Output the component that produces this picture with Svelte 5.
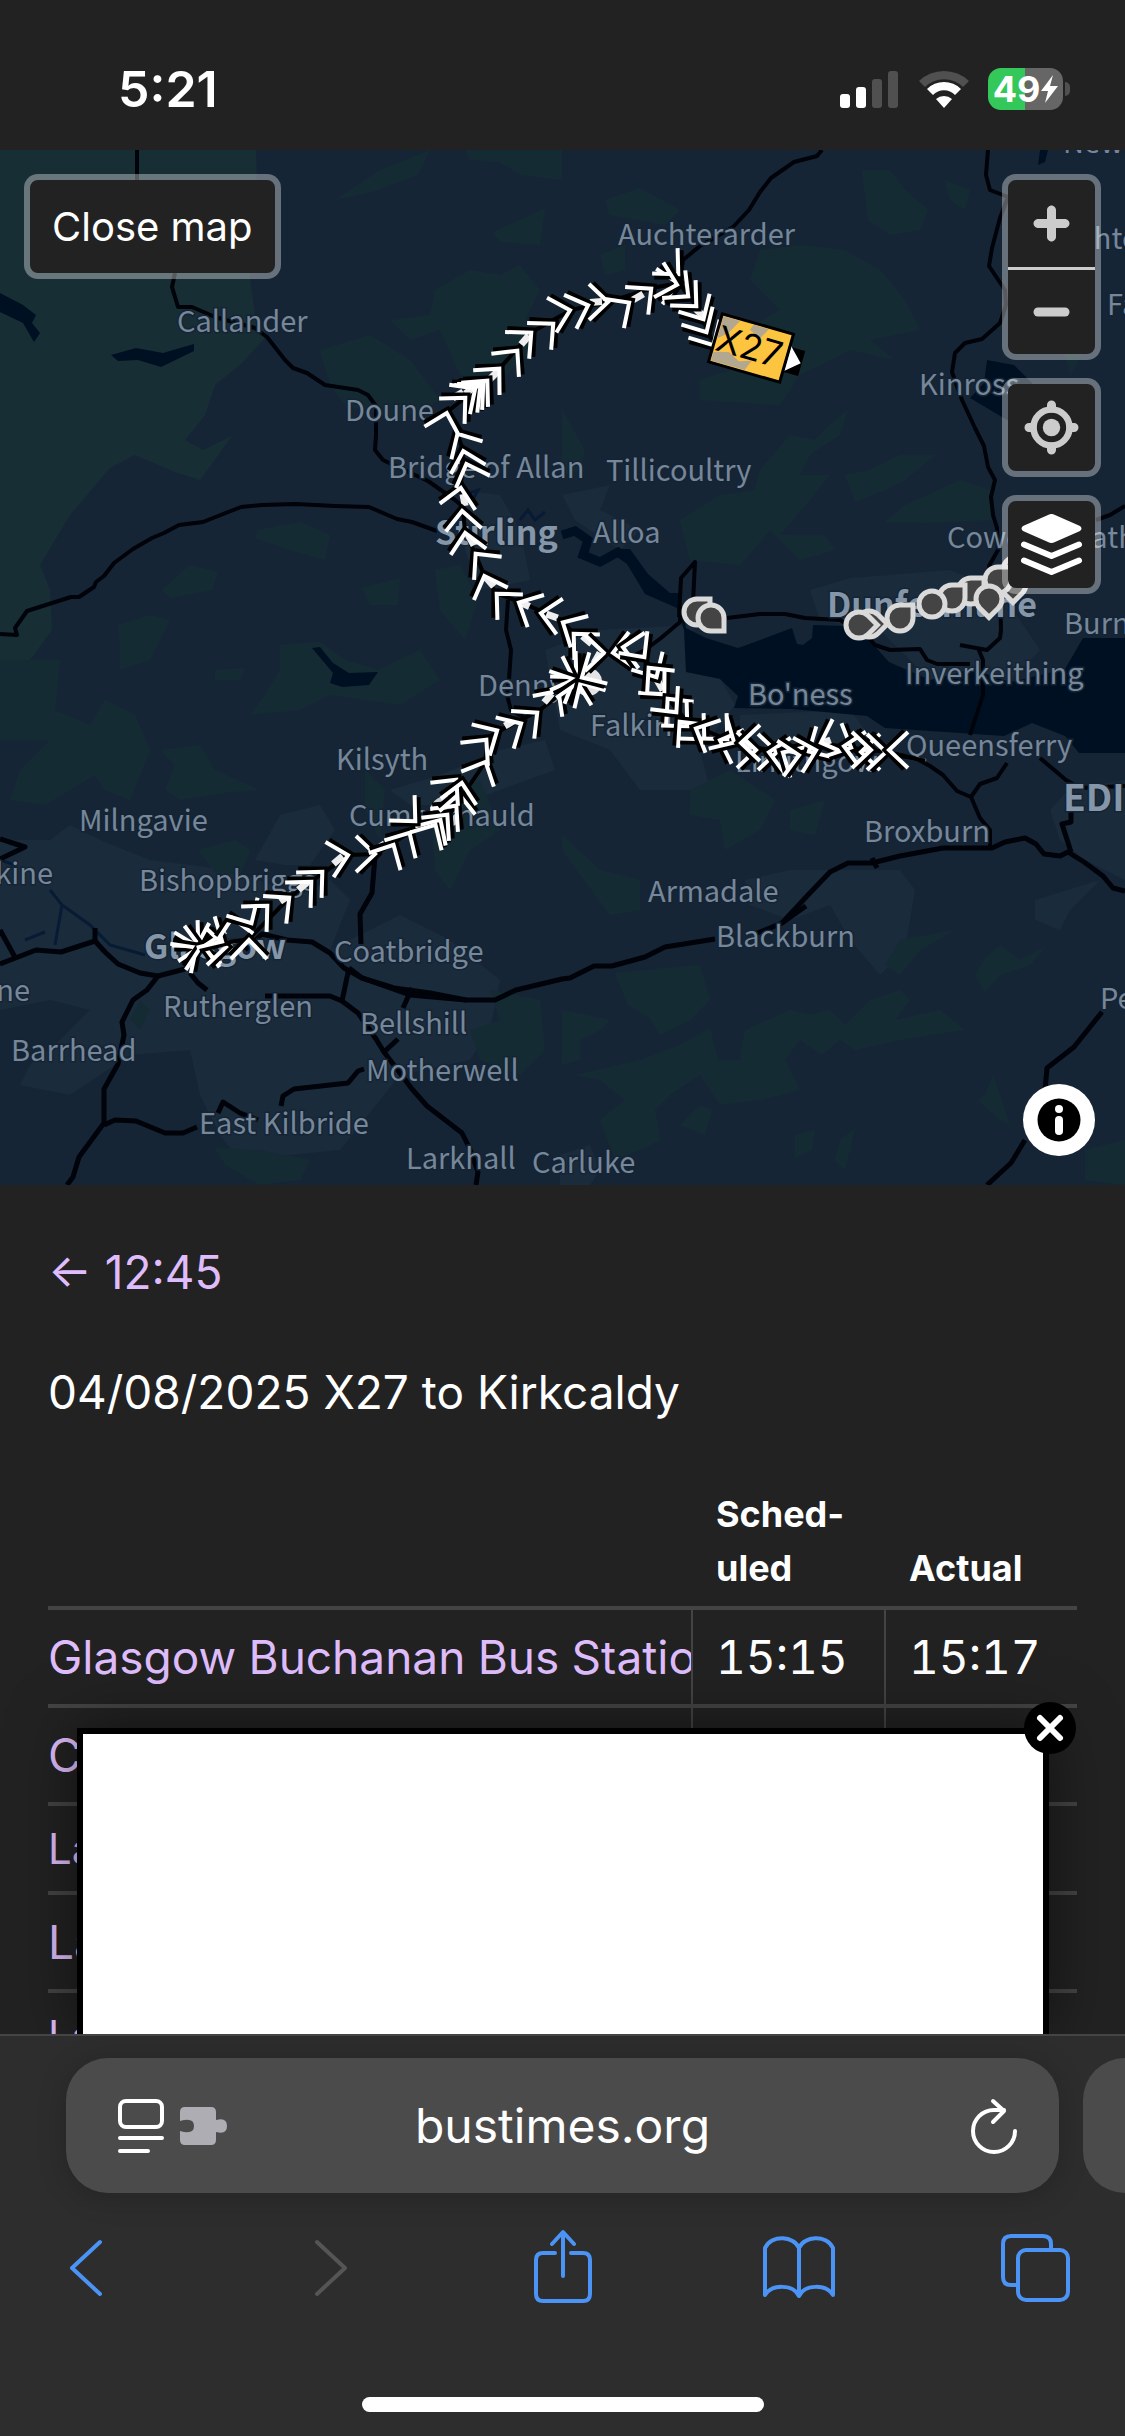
<script>
  const woods = [
    'M335 50L380 20L430 0L418 25L372 42Z',
    'M465 0H562V30L520 25L500 12L470 10Z',
    'M492 82L520 70L545 58L540 95L500 92Z',
    'M435 140L470 120L500 125L520 115L540 140L525 170L535 200L500 230L460 225L440 180L410 190L390 170L430 165Z',
    'M320 200L370 185L410 210L440 250L400 270L345 255L330 235Z',
    'M258 380L300 372L330 385L325 410L290 400L255 388Z',
    'M162 440L190 415L218 422L212 440L170 448Z',
    'M362 438L400 428L398 455L370 455Z',
    'M435 420L460 415L478 450L465 490L440 460Z',
    'M118 475L150 465L170 470L150 510L120 520L120 495Z',
    'M280 495L320 492L345 510L378 520L420 500L440 530L400 555L330 545L300 560L250 565L265 545L280 520Z',
    'M0 510L60 510L55 560L90 575L105 550L135 565L150 600L130 650L105 640L95 625L45 655L10 650L20 620L50 590L0 590Z',
    'M215 520L245 518L240 530L215 530Z',
    'M160 600L200 595L215 620L260 640L230 642L180 650L165 640L175 615Z',
    'M198 700L235 690L250 700L240 725L215 722Z',
    'M365 620L385 640L380 690L365 660Z',
    'M430 650L480 630L500 680L470 700L450 740L435 720Z',
    'M490 840L540 850L545 900L520 925L480 910L470 880L500 870Z',
    'M605 50L640 38L680 60L665 75L610 65Z',
    'M600 105L625 95L625 120L605 125Z',
    'M862 20L890 20L905 40L928 60L920 80L890 85L868 70Z',
    'M945 30L970 40L965 60L950 50Z',
    'M760 100L800 95L845 100L880 120L905 150L920 180L870 190L895 210L850 200L800 225L780 255L700 250L700 230L760 210L745 180L780 160L750 130Z',
    'M562 260L585 300L580 320L562 325Z',
    'M790 285L815 290L835 270L848 260L840 285L810 305L800 325L830 325L810 350L780 385L825 385L835 400L800 410L770 380L740 415L690 410L680 370L720 345L755 340L760 320Z',
    'M845 325L870 320L900 305L935 305L905 330L885 340L855 352Z',
    'M885 372L905 355L960 330L990 340L992 370L930 373Z',
    'M690 640L730 620L775 650L760 680L725 700L720 670L690 665Z',
    'M790 660L825 650L815 685L790 680Z',
    'M562 685L600 720L640 730L640 760L610 765L562 700Z',
    'M615 823L665 818L700 815L710 850L690 870L660 885L650 868L628 855Z',
    'M562 860L610 870L600 880L580 890L580 910L562 915Z',
    'M575 925L640 910L680 895L710 878L718 910L740 910L745 880L790 860L810 865L830 860L845 875L870 850L900 840L910 850L895 870L940 860L965 880L930 885L900 890L855 900L840 890L822 905L800 890L785 910L800 940L760 950L720 955L700 925L670 945L655 960L660 990L640 1000L615 1010L600 970L625 950L600 930Z',
    'M985 808L1000 795L1020 810L1048 795L1030 815L1000 825L985 842L975 825Z',
    'M900 790L955 780L920 800L900 825L885 815Z',
    'M680 975L700 955L712 960L705 985Z',
    'M795 985L815 980L812 1000L795 1008Z',
    'M840 990L855 978L845 1020L835 1010Z',
    'M985 945L993 925L1010 975L1000 970L978 950Z',
    'M1085 1000L1125 990V1035L1085 1030Z',
    'M1095 140L1085 200L1070 225L1065 205L1080 180Z',
    'M215 998L260 1000L310 1010L300 1030L260 1035L225 1015Z',
    'M140 850L150 860L140 880L130 870Z'
  ];
  const highland = 'M0 0H256L258 70L250 130L255 165L268 185L240 215L215 235L205 265L185 290L203 300L232 286L222 300L200 330L175 322L135 305L110 318L70 365L40 415L50 440L52 480L30 510L0 520Z';
  const towns = [
    'M0 690L50 690L70 675L100 690L150 710L230 720L300 745L330 730L350 750L330 800L400 765L450 790L500 830L490 880L470 910L400 925L340 1000L240 1010L220 985L200 945L190 900L130 905L70 945L20 935L30 915L60 890L90 860L50 850L0 860Z',
    'M255 710L280 665L320 655L335 680L310 715L285 715Z',
    'M390 640L440 625L500 600L545 590L555 620L500 640L460 655L410 655Z',
    'M460 340L500 345L520 380L530 430L480 440L465 400Z',
    'M562 345L610 335L600 360L640 380L620 400L575 370Z',
    'M545 500L600 480L690 475L735 555L700 600L710 640L640 640L610 600L560 580Z',
    'M810 440L850 428L950 420L1000 440L1040 500L1000 540L930 530L880 480L820 470Z',
    'M740 565L850 560L880 600L780 620L740 595Z',
    'M745 730L790 720L900 720L915 740L905 800L880 825L850 790L830 755L790 770L750 755Z',
    'M1050 660L1068 640L1125 630V730L1085 710L1060 690Z',
    'M1035 750L1100 730L1070 760L1060 780L1035 770Z',
    'M560 1005L590 995L600 1020L590 1035H560Z'
  ];
  const water = [
    'M0 143L23 155L36 165L32 173L40 183L34 192L23 173L0 162Z',
    'M111 205L136 198L163 203L194 194V201L161 217L138 210L118 211Z',
    'M312 498L320 497L333 513L349 523L378 522L369 535L342 537L330 533L333 523Z',
    'M987 210L1014 215L1032 233L1040 280L1007 270L970 248L984 233Z',
    'M1040 0H1048L1045 12L1038 15Z',
    'M618 399L630 399L648 424L670 443L679 443L686 478L706 488L738 498L760 490L792 478L797 494L803 495L812 488L813 475L846 476L871 492L889 512L930 530L971 519L1011 532L1065 519L1083 488H1125V603H1079L1065 586L1032 573L1004 586L885 578L867 566L792 559L734 558L738 546L720 529L686 522L684 480L677 458L645 444Z'
  ];
  const roads = [
    'M137 0V30', 'M175 123L172 137L178 157L192 157L215 167L255 178L267 187L285 210L293 218L307 223L325 235L358 240L368 245L376 256V285L375 300L383 310L400 318L428 331L455 350L462 356',
    'M0 484L17 485L15 478L27 461L71 447H79L94 437L96 432L104 426L114 413L133 399L152 388L164 383L179 375L203 372L241 357L262 355L296 354L335 356L369 357L397 369L412 372L437 381',
    'M508 450L506 480L511 500L509 530L507 545L511 560L525 568',
    'M822 0L817 6L794 12L771 28L760 42L749 60L733 77L700 96L683 110L680 130',
    'M988 0L986 25L990 40L1008 47L1000 68L992 98L989 116L1005 140L1006 155L1000 173L982 189L965 193L955 203L952 222L962 250L975 278L984 296L988 317L995 330L991 347L993 365L997 378L998 400L989 416L1000 440L1001 480L1000 488L987 500L960 495',
    'M978 498L983 510V545L970 585',
    'M727 468L760 464H785L805 468L840 470L868 487L875 495L890 500L920 499L927 510L937 514H970',
    'M680 466V472L661 488L645 500L620 512', 'M693 452L695 412L681 428L679 467', 'M1096 370L1110 365L1125 356',
    'M882 604L915 608L930 616L943 625L957 641L971 647L980 668L990 680V697', 'M971 647L980 634L997 628L1007 613', 'M1040 608L1066 630L1080 638L1125 636'
  ];
  const motorways = [
    'M782 773L808 745L830 722L848 713L872 713L900 706L943 698H992L1005 692L1025 688L1036 694L1044 704L1060 706L1068 702L1084 712L1103 726L1113 738L1125 741',
    'M1071 702L1062 674L1071 672V660', 'M872 708L877 718', 'M806 756L782 773L770 778L755 784', 'M715 789L665 797L645 807L612 816H594L570 828L562 829L516 840L495 850H466L430 843L394 838L362 828L344 818L330 803L312 792L287 790L262 784L245 800',
    'M349 818L362 828L410 845L466 850', 'M375 706L372 743L360 764L361 794', 'M349 818L342 851L358 863L376 889L384 902L412 939L427 956L462 983L469 997L478 1022L476 1035',
    'M342 851L330 846H265', 'M207 840L198 833L190 823', 'M412 838L403 858', 'M398 889L384 902',
    'M0 814L18 807L36 800L61 802L95 791L105 802L118 814L140 823L158 826L185 819', 'M95 778V791',
    'M158 826L147 840L133 850L122 872L124 885L118 914L104 939V973L79 1007L73 1027L67 1035',
    'M104 975L115 970L136 971L165 983H183L197 977', 'M218 963L223 952L240 963L258 970', 'M281 956L283 946L294 939L348 933L358 921L364 919',
    'M0 780L16 809', 'M0 689L25 697L0 709', 'M1102 862L1074 897L1047 918L1045 940', 'M1025 990L1011 1013L987 1035'
  ];
  const routes = [
    'M199 797L249 789L290 747L323 723L349 705L376 704L410 682L450 664L484 614L490 586L540 560L578 530L573 483L562 470L520 452L496 443L484 425L475 403L465 382L461 337L463 300L457 283L447 262L466 247L500 218L532 182L571 160L609 152L652 138L679 133L697 157L712 190',
    'M578 530L605 503L645 508L665 545L688 573L735 593L778 602L808 602L820 593L852 598L888 602L925 611'
  ];

  // [label, x, baseline]
  const places = [
    ['Callander', 177, 182], ['Doune', 345, 271], ['Bridge of Allan', 388, 328], ['Auchterarder', 618, 95],
    ['Tillicoultry', 606, 331], ['Alloa', 593, 393], ['Kinross', 919, 245], ['Cowdenbeath', 947, 398],
    ['Newburgh', 1063, 3], ['Auchtermuchty', 1044, 99], ['Falkland', 1107, 165], ['Burntisland', 1064, 484],
    ['Inverkeithing', 905, 534], ["Bo'ness", 748, 555], ['Falkirk', 590, 586], ['Linlithgow', 735, 622],
    ['Queensferry', 906, 606], ['Broxburn', 864, 692], ['Armadale', 648, 752], ['Blackburn', 716, 797],
    ['Penicuik', 1100, 859], ['Denny', 478, 546], ['Kilsyth', 336, 620], ['Cumbernauld', 349, 676],
    ['Milngavie', 79, 681], ['Bishopbriggs', 139, 741], ['Coatbridge', 334, 812], ['Rutherglen', 163, 867],
    ['Bellshill', 360, 884], ['Barrhead', 11, 911], ['Motherwell', 366, 931], ['East Kilbride', 199, 984],
    ['Larkhall', 406, 1019], ['Carluke', 532, 1023]
  ];
  const cut = [['Erskine', 53, 734], ['Johnstone', 30, 851]];

  // [x, y, heading] of each recorded position, east is 0
  const track = [
    [199, 797, 45], [197, 797, 75], [201, 797, 10], [197, 797, -35], [200, 797, -100], [203, 796, 190],
    [227, 797, 0], [223, 792, 30], [232, 767, -100], [252, 774, 60], [249, 789, -90],
    [268, 755, -45], [290, 747, -40], [312, 731, -45], [323, 721, -45], [349, 705, -13], [376, 704, 0],
    [394, 694, -62], [410, 682, -60], [436, 674, -60], [441, 669, -58], [448, 664, -50], [457, 655, -50], [416, 672, 45],
    [459, 643, -85], [457, 629, -50], [462, 632, -80], [486, 611, -65], [487, 589, -50], [498, 580, -30], [522, 573, -30], [538, 562, -40],
    [559, 540, -55], [577, 528, 45], [575, 530, 20], [575, 529, -25], [578, 532, -78], [580, 532, -120], [581, 528, 150],
    [573, 483, -135], [562, 472, -151], [540, 463, -170], [518, 452, -153], [496, 443, -135],
    [484, 425, -110], [475, 403, -130], [465, 382, -100], [462, 360, -95], [461, 337, -80], [466, 313, -110], [463, 300, -105],
    [457, 283, -120], [447, 262, -75], [466, 247, -45], [476, 238, -35], [481, 236, -40], [484, 233, -44], [488, 230, -48],
    [500, 218, -47], [518, 200, -50], [532, 182, -42], [554, 173, -42], [571, 160, -15], [589, 155, -20], [609, 152, 0],
    [630, 152, -35], [652, 138, -40], [679, 133, -10], [679, 125, 45], [678, 135, 15], [689, 147, 40], [697, 157, 45], [704, 170, 60],
    [707, 183, 60], [714, 196, 60],
    [605, 503, 0], [612, 503, 171], [622, 497, 190], [645, 508, 53], [657, 528, 60], [665, 545, 47], [648, 517, -130], [667, 548, -130],
    [677, 563, 50], [688, 577, 45], [679, 571, -130], [705, 590, 45], [695, 578, -155], [728, 590, 45], [719, 590, -160],
    [735, 593, 30], [757, 600, 0], [740, 593, 180], [778, 602, 0], [768, 602, 190], [782, 602, -150], [800, 605, -10],
    [808, 602, 150], [817, 600, -15], [820, 593, 160], [852, 598, 25], [843, 596, 190], [860, 602, 180], [872, 600, 0], [887, 602, 0], [888, 600, 180]
  ];
  const glints = [
    [285, 748, -35], [303, 736, -40], [338, 710, -40], [380, 697, -35], [510, 573, -30], [548, 548, -50],
    [524, 454, 25], [552, 466, 20], [587, 490, 40], [597, 508, -60], [490, 432, 50], [471, 390, 60], [464, 350, 80],
    [458, 245, -30], [470, 240, -40], [494, 225, -45], [525, 190, -50], [596, 152, -5], [638, 147, -30],
    [660, 535, 60], [748, 594, 30], [790, 600, 10], [825, 592, -20], [867, 599, 10], [700, 163, 45]
  ];

  // [x, y, direction of the point] - null is a plain dot
  const vehicles = [
    [1016, 420, 0], [1013, 434, 90], [998, 430, -45], [971, 441, -45], [952, 448, -45], [932, 454, null], [989, 449, 90],
    [900, 468, -45], [869, 474, 0], [859, 475, 0], [697, 462, -45], [711, 468, 45]
  ];

  const stops = [
    { name: 'Glasgow Buchanan Bus Station', scheduled: '15:15', actual: '15:17' },
    { name: 'Cumbernauld' },
    { name: 'Larbert', minor: true },
    { name: 'Larbert' },
    { name: 'Larbert', minor: true },
    { name: 'Larbert' }
  ];
  let advert = $state(true);
</script>

<div class="phone">
  <header class="status">
    <span class="clock">5:21</span>
    <div class="indicators">
      <svg width="60" height="38" viewBox="0 0 60 38" fill="#fff" aria-hidden="true">
        <rect x="0" y="24" width="10" height="14" rx="3" />
        <rect x="16" y="17" width="10" height="21" rx="3" />
        <rect x="32" y="9" width="10" height="29" rx="3" fill="#505050" />
        <rect x="48" y="1" width="10" height="37" rx="3" fill="#505050" />
      </svg>
      <svg width="52" height="38" viewBox="0 0 52 38" aria-hidden="true">
        <path d="M1 11A36 36 0 0 1 51 11L45 17A27 27 0 0 0 7 17Z" fill="#505050" />
        <path d="M9 19A24 24 0 0 1 43 19L37 25A15 15 0 0 0 15 25Z" fill="#fff" />
        <path d="M18 29A12 12 0 0 1 34 29L26 38Z" fill="#fff" />
      </svg>
      <div class="battery">
        <span>49</span>
        <svg width="17" height="28" viewBox="0 0 17 28" aria-hidden="true"><path d="M12 0L0 16H7L4 28L17 11H9Z" fill="#fff" /></svg>
      </div>
    </div>
  </header>

  <section class="map">
    <svg class="canvas" viewBox="0 0 1125 1035">
      <g fill="#1a2b3c">{#each towns as d}<path {d} />{/each}</g>
      <path d={highland} fill="#172e35" />
      <g fill="#152b34">{#each woods as d}<path {d} />{/each}</g>
      <g fill="#001023">{#each water as d}<path {d} />{/each}</g>
      <path class="river" d="M562 385L575 381L588 390L583 405L600 412L618 402L632 412" />
      <path class="stream" d="M0 710L15 715M50 740L62 755L90 775L110 795L145 805M62 755L55 795M25 790L45 782M465 345L478 340L470 355M520 370L528 360L535 370L545 362" />
      <g class="road">{#each roads as d}<path {d} />{/each}</g>
      <g class="motorway">{#each motorways as d}<path {d} />{/each}</g>
      <circle cx="588" cy="532" r="14" fill="#e4e4e6" />
      <circle cx="446" cy="662" r="16" fill="#c9ccd0" />
      <g class="place">
        {#each places as [name, x, y]}<text {x} {y}>{name}</text>{/each}
        {#each cut as [name, x, y]}<text {x} {y} text-anchor="end">{name}</text>{/each}
      </g>
      <g class="place town">
        <text x="435" y="395">Stirling</text>
        <text x="827" y="467">Dunfermline</text>
        <text x="144" y="809">Glasgow</text>
        <text class="city" x="1063" y="661">EDINBURGH</text>
      </g>
      <g class="route">{#each routes as d}<path {d} />{/each}</g>
      <g class="glint">
        {#each glints as [x, y, turn]}<path d="M-6 0H6" transform="translate({x} {y}) rotate({turn})" />{/each}
      </g>
      {#each track as [x, y, turn]}
        <g transform="translate({x} {y}) rotate({turn})">
          <path class="arrow dark" d="M-16 -19L3 0L-16 19" />
          <path class="arrow" d="M-20 -18L-1 0L-20 18" />
        </g>
      {/each}
      <g class="vehicle">
        {#each vehicles as [x, y, point]}
          {#if point === null}
            <circle cx={x} cy={y} r="13" />
          {:else}
            <path d="M0 -13H13V0A13 13 0 1 1 0 -13Z" transform="translate({x} {y}) rotate({point + 45})" />
          {/if}
        {/each}
      </g>
      <g transform="translate(751 198) rotate(16)">
        <rect x="36" y="-12" width="17" height="26" fill="#000" />
        <path d="M38 -13L52 1L38 13Z" fill="#fff" />
        <rect x="-37" y="-25" width="74" height="50" fill="#fdc43f" stroke="#000" stroke-width="3" />
        <path d="M-35 -23H-18L-26 -8L-35 0ZM-4 -23H12L6 -12L-6 -17ZM-35 14L-20 10L-8 16L4 12L0 23H-35Z" fill="#b3a88f" />
        <text class="bus" x="-2" y="12" text-anchor="middle">X27</text>
      </g>
    </svg>

    <button class="close-map">Close map</button>
    <div class="controls">
      <div class="control">
        <button aria-label="Zoom in">
          <svg width="87" height="87" viewBox="0 0 29 29" fill="#ccc"><path d="M14.5 8.5c-.75 0-1.5.75-1.5 1.5v3h-3c-.75 0-1.5.75-1.5 1.5S9.25 16 10 16h3v3c0 .75.75 1.5 1.5 1.5S16 19.75 16 19v-3h3c.75 0 1.5-.75 1.5-1.5S19.75 13 19 13h-3v-3c0-.75-.75-1.5-1.5-1.5z" /></svg>
        </button>
        <button aria-label="Zoom out">
          <svg width="87" height="84" viewBox="0 0 29 28" fill="#ccc"><rect x="8.5" y="12.5" width="12" height="3" rx="1.5" /></svg>
        </button>
      </div>
      <div class="control">
        <button aria-label="Find my location">
          <svg width="87" height="87" viewBox="0 0 29 29" fill="none" stroke="#ccc">
            <circle cx="14.5" cy="14.5" r="6" stroke-width="2.2" />
            <circle cx="14.5" cy="14.5" r="2.9" fill="#ccc" stroke="none" />
            <path d="M14.5 7V8M14.5 21V22M7 14.5H8M21 14.5H22" stroke-width="3" stroke-linecap="round" />
          </svg>
        </button>
      </div>
      <div class="control">
        <button aria-label="Map style">
          <svg width="87" height="87" viewBox="0 0 87 87" fill="#fff">
            <path d="M40 14Q43.500 12 47 14L72 25Q75 27.500 72 30L47 41Q43.500 43 40 41L15 30Q12 27.500 15 25Z" />
            <path d="M16 43.500L43.500 55L71 43.500M16 59.500L43.500 71L71 59.500" fill="none" stroke="#fff" stroke-width="6" stroke-linecap="round" stroke-linejoin="round" />
          </svg>
        </button>
      </div>
    </div>
    <button class="info" aria-label="Attribution">
      <svg width="72" height="72" viewBox="0 0 72 72">
        <circle cx="36" cy="36" r="21.500" />
        <circle cx="36" cy="25" r="4" fill="#fff" />
        <rect x="32" y="32" width="8" height="19" rx="4" fill="#fff" />
      </svg>
    </button>
  </section>

  <main>
    <p><a href="#previous">← 12:45</a></p>
    <p>04/08/2025 X27 to Kirkcaldy</p>
    <table>
      <thead>
        <tr><th class="stop"></th><th>Sched&shy;uled</th><th>Actual</th></tr>
      </thead>
      <tbody>
        {#each stops as stop}
          <tr class:minor={stop.minor}>
            <td class="stop"><a href="#stop">{stop.name}</a></td>
            <td>{stop.scheduled ?? ''}</td>
            <td>{stop.actual ?? ''}</td>
          </tr>
        {/each}
      </tbody>
    </table>
    {#if advert}
      <aside>
        <button class="dismiss" aria-label="Close" onclick={() => (advert = false)}>
          <svg width="52" height="52" viewBox="0 0 52 52"><path d="M16 16L36 36M36 16L16 36" stroke="#fff" stroke-width="6" stroke-linecap="round" /></svg>
        </button>
      </aside>
    {/if}
  </main>

  <footer>
    <div class="tabs-row">
      <div class="address">
        <button class="page-menu" aria-label="Page menu">
          <svg width="110" height="56" viewBox="0 0 110 56" fill="none" stroke="#fff" stroke-width="4" stroke-linecap="round">
            <rect x="2" y="3" width="42" height="26" rx="6" />
            <path d="M2 40H44M2 53H30" />
            <path d="M67 9H93Q98 9 98 14V22Q109 19 109 28T98 34V42Q98 47 93 47H67Q62 47 62 42V33Q76 37 76 28T62 23V14Q62 9 67 9Z" fill="#aeadb4" stroke="none" />
          </svg>
        </button>
        <span class="domain">bustimes.org</span>
        <button aria-label="Reload">
          <svg width="46" height="56" viewBox="0 0 46 56" fill="none" stroke="#fff" stroke-width="4" stroke-linecap="round" stroke-linejoin="round">
            <path d="M44 33A21 21 0 1 1 23 12H33" />
            <path d="M22 3L33 13L22 24" />
          </svg>
        </button>
      </div>
      <div class="next-tab"></div>
    </div>
    <nav>
      <button aria-label="Back"><svg viewBox="0 0 80 80"><path d="M53 14L25 40L53 66" /></svg></button>
      <button aria-label="Forward" disabled><svg viewBox="0 0 80 80"><path d="M33 14L61 40L33 66" /></svg></button>
      <button aria-label="Share"><svg viewBox="0 0 80 80"><path d="M34 25H22Q15 25 15 32V66Q15 73 22 73H62Q69 73 69 66V32Q69 25 62 25H50M42 48V5M31 16L42 4L53 16" /></svg></button>
      <button aria-label="Bookmarks"><svg viewBox="0 0 80 80"><path d="M41 19V68C35 56 14 56 7 67V20C14 6 36 8 41 20C46 8 68 6 75 20V67C68 56 47 56 41 68" /></svg></button>
      <button aria-label="Tabs"><svg viewBox="0 0 80 80"><path d="M22 57H16Q8 57 8 49V16Q8 8 16 8H48Q56 8 56 16V22" /><rect x="23" y="22" width="50" height="50" rx="8" /></svg></button>
    </nav>
    <div class="home"></div>
  </footer>
</div>

<style>
  :global(body) { margin: 0; background: #222; }
  .phone {
    height: 100vh; display: flex; flex-direction: column; overflow: hidden;
    background: #222; color: #fff; font: 46px/72px Inter, "Liberation Sans", sans-serif;
  }
  button { padding: 0; border: 0; background: none; color: inherit; font: inherit; cursor: pointer; }
  svg { display: block; }
  a { color: #dfbdfc; text-decoration: none; }

  .status {
    flex: 0 0 150px; box-sizing: border-box; padding: 28px 62px 0 118px;
    display: flex; align-items: center; justify-content: space-between;
  }
  .clock { font-size: 50px; font-weight: 600; }
  .indicators { display: flex; align-items: center; gap: 18px; }
  .battery {
    position: relative; width: 75px; height: 42px; border-radius: 13px;
    display: flex; align-items: center; justify-content: center; gap: 1px;
    background: linear-gradient(90deg, #34c759 49%, #666 49%); font-size: 36px; font-weight: 700; line-height: 42px;
  }
  .battery::after {
    content: ''; position: absolute; right: -7px; top: 14px; width: 5px; height: 14px;
    background: #505050; border-radius: 0 5px 5px 0;
  }

  .map { position: relative; flex: none; aspect-ratio: 1125 / 1035; background: #162536; overflow: hidden; }
  .canvas { width: 100%; height: 100%; }
  .road path, .motorway path, .route path { fill: none; stroke: #000309; stroke-width: 4; stroke-linejoin: round; }
  .motorway path { stroke-width: 5; }
  .route path { stroke: #000; }
  .river { fill: none; stroke: #001023; stroke-width: 9; }
  .stream { fill: none; stroke: #071b34; stroke-width: 3; }
  .place {
    font-family: "Noto Sans CJK SC", "Noto Sans", sans-serif; font-size: 29px;
    fill: #76879a; stroke: #152434; stroke-width: 3px; paint-order: stroke;
  }
  .town { font-size: 34px; font-weight: 700; fill: #8496a8; }
  .city { font-size: 37px; }
  .arrow { fill: none; stroke: #fff; stroke-width: 4; }
  .dark { stroke: #000; stroke-width: 5; }
  .glint path { stroke: #eee; stroke-width: 7; }
  .vehicle { fill: #444; stroke: #dadada; stroke-width: 5; }
  .bus { font-size: 36px; fill: #000; }

  .close-map, .control { border: 6px solid rgba(255, 255, 255, .35); border-radius: 14px; background: #222 padding-box; }
  .close-map { position: absolute; top: 24px; left: 24px; padding: 0 22px; font-size: 40px; line-height: 93px; }
  .controls { position: absolute; top: 24px; right: 24px; display: grid; gap: 18px; }
  .control button { display: block; }
  .control button + button { border-top: 3px solid #ccc; }
  .info { position: absolute; right: 30px; bottom: 29px; border-radius: 50%; background: #fff; }

  main { position: relative; flex: 1; min-height: 0; overflow: hidden; padding: 3px 48px 0; }
  p { margin: 48px 0; }
  table { width: 100%; table-layout: fixed; border-collapse: separate; border-spacing: 0; }
  th, td { padding: 11px 0 11px 25px; text-align: left; vertical-align: bottom; border-bottom: 4px solid #444; }
  th { width: 168px; font-size: 36px; line-height: 54px; }
  td { padding-left: 23px; border-left: 2px solid #444; height: 72px; font-variant-numeric: tabular-nums; }
  th.stop, td.stop { width: auto; padding-left: 0; border-left: 0; overflow: hidden; white-space: nowrap; }
  .minor td { font-size: 42px; line-height: 63px; height: 63px; }
  aside {
    position: absolute; top: 543px; bottom: 0; left: 77px; right: 76px;
    border: 6px solid #000; border-bottom: 0; background: #fff; box-shadow: 0 0 60px rgba(0, 0, 0, .5);
  }
  .dismiss { position: absolute; top: -32px; right: -33px; border-radius: 50%; background: #000; }

  footer { flex: 0 0 402px; box-sizing: border-box; border-top: 2px solid #444; background: #2d2d2e; overflow: hidden; }
  .tabs-row { display: flex; gap: 24px; margin: 22px 0 0 66px; }
  .address {
    flex: 1; box-sizing: border-box; height: 135px; padding: 0 42px; border-radius: 42px;
    display: grid; grid-template-columns: 1fr auto 1fr; align-items: center; justify-items: start;
    background: #4b4b4c; box-shadow: 0 4px 30px rgba(0, 0, 0, .2);
  }
  .page-menu { margin-left: 10px; }
  .domain { font-size: 48px; }
  .address button:last-child { justify-self: end; }
  .next-tab { flex: 0 0 42px; border-radius: 42px 0 0 42px; background: #4b4b4c; }
  nav { display: flex; justify-content: space-between; padding: 35px 50px 0 47px; }
  nav svg { width: 80px; height: 80px; fill: none; stroke: #4b93f5; stroke-width: 4; stroke-linecap: round; stroke-linejoin: round; }
  nav button:disabled svg { stroke: #555; }
  .home { width: 402px; height: 15px; margin: 89px auto 0; border-radius: 8px; background: #fff; }
</style>
